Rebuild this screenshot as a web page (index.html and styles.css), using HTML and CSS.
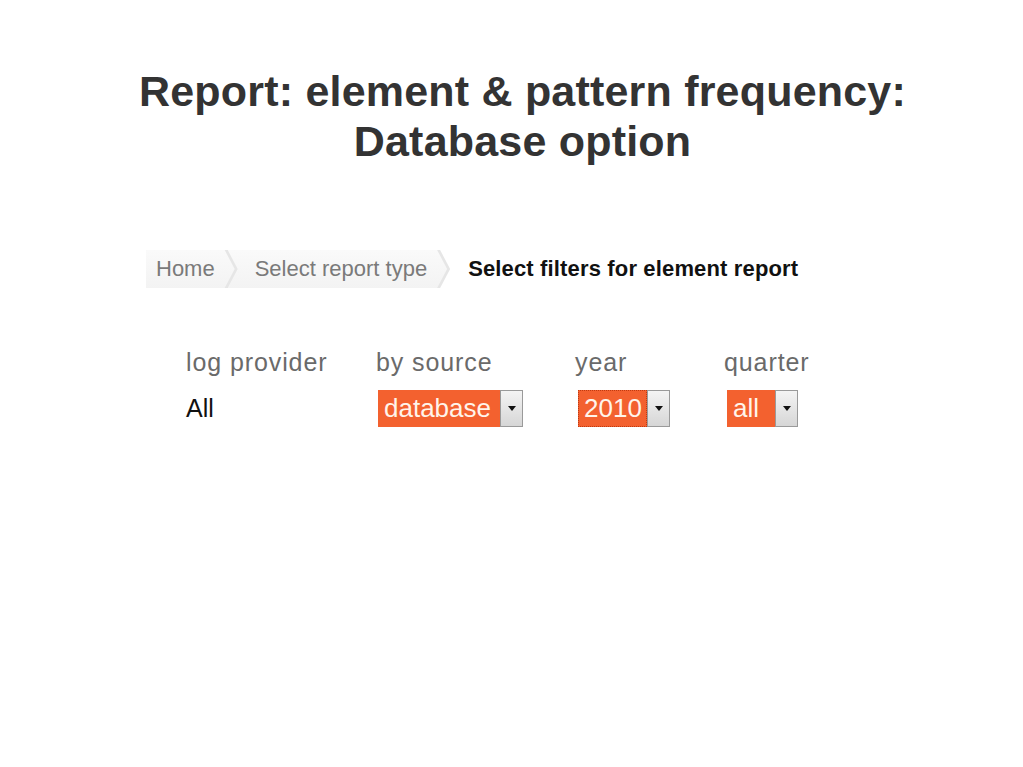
FILE: index.html
```html
<!DOCTYPE html>
<html>
<head>
<meta charset="utf-8">
<link rel="stylesheet" href="styles.css">
</head>
<body>
<div class="slide">
  <h1 class="title">Report: element &amp; pattern frequency:<br>Database option</h1>
  <nav class="crumbs">
    <span class="trail">
      <span class="crumb first">Home</span>
      <span class="crumb">Select report type</span>
    </span>
    <span class="current">Select filters for element report</span>
  </nav>
  <div class="filters">
    <div class="filter f1">
      <div class="label">log provider</div>
      <div class="value">All</div>
    </div>
    <div class="filter f2">
      <div class="label">by source</div>
      <div class="select"><span class="sel-text w-db">database</span><span class="arrow"></span></div>
    </div>
    <div class="filter f3">
      <div class="label">year</div>
      <div class="select"><span class="sel-text w-yr dotted">2010</span><span class="arrow"></span></div>
    </div>
    <div class="filter f4">
      <div class="label">quarter</div>
      <div class="select"><span class="sel-text w-q">all</span><span class="arrow"></span></div>
    </div>
  </div>
</div>
</body>
</html>
```
FILE: styles.css
```css
html, body {
  margin: 0;
  padding: 0;
  background: #ffffff;
}
.slide {
  width: 1023px;
  height: 767px;
  display: flex;
  flex-direction: column;
  font-family: "Liberation Sans", Arial, sans-serif;
}
.title {
  margin: 66px 0 0 22px;
  text-align: center;
  font-size: 43px;
  line-height: 50px;
  font-weight: bold;
  color: #333333;
  letter-spacing: 0.2px;
}
.crumbs {
  margin: 84px 0 0 146px;
  display: flex;
  align-items: center;
  height: 38px;
}
.trail {
  display: flex;
  height: 38px;
  padding-right: 3px;
  background: #e6e6e6;
  clip-path: polygon(0 0, calc(100% - 10px) 0, 100% 50%, calc(100% - 10px) 100%, 0 100%);
}
.crumb {
  display: flex;
  align-items: center;
  height: 38px;
  font-size: 22px;
  color: #7a7a7a;
  padding: 0 20px 0 27px;
  margin-left: -7px;
  background: linear-gradient(#fafafa, #f3f3f3);
  clip-path: polygon(0 0, calc(100% - 10px) 0, 100% 50%, calc(100% - 10px) 100%, 0 100%, 10px 50%);
}
.crumb.first {
  margin-left: 0;
  padding-left: 10px;
  padding-right: 20px;
  clip-path: polygon(0 0, calc(100% - 10px) 0, 100% 50%, calc(100% - 10px) 100%, 0 100%);
}
.current {
  display: flex;
  align-items: center;
  height: 38px;
  font-size: 22px;
  color: #111111;
  font-weight: bold;
  letter-spacing: 0.15px;
  padding-left: 18px;
}
.filters {
  margin: 59px 0 0 186px;
  display: flex;
}
.filter {
  display: flex;
  flex-direction: column;
}
.f1 { width: 190px; }
.f2 { width: 199px; }
.f3 { width: 149px; }
.label {
  font-size: 25px;
  color: #6a6a6a;
  height: 30px;
  line-height: 30px;
  letter-spacing: 0.9px;
}
.value {
  margin-top: 13px;
  font-size: 25px;
  color: #111111;
  line-height: 37px;
}
.select {
  margin-top: 13px;
  display: flex;
  height: 37px;
}
.f2 .select { margin-left: 2px; }
.f3 .select { margin-left: 3px; }
.f4 .select { margin-left: 3px; }
.sel-text {
  background: #f3612f;
  color: #fff4ea;
  font-size: 26px;
  line-height: 37px;
  padding: 0 6px;
  box-sizing: border-box;
}
.w-db { width: 122px; }
.w-yr { width: 69px; }
.w-q { width: 48px; }
.dotted {
  outline: 1px dotted #c03a10;
  outline-offset: -1px;
}
.arrow {
  width: 23px;
  box-sizing: border-box;
  border: 1px solid #9a9a9a;
  background: linear-gradient(#f4f4f4, #d6d6d6);
  position: relative;
}
.arrow::after {
  content: "";
  position: absolute;
  left: 7px;
  top: 15px;
  border-left: 4px solid transparent;
  border-right: 4px solid transparent;
  border-top: 5px solid #111111;
}
```
